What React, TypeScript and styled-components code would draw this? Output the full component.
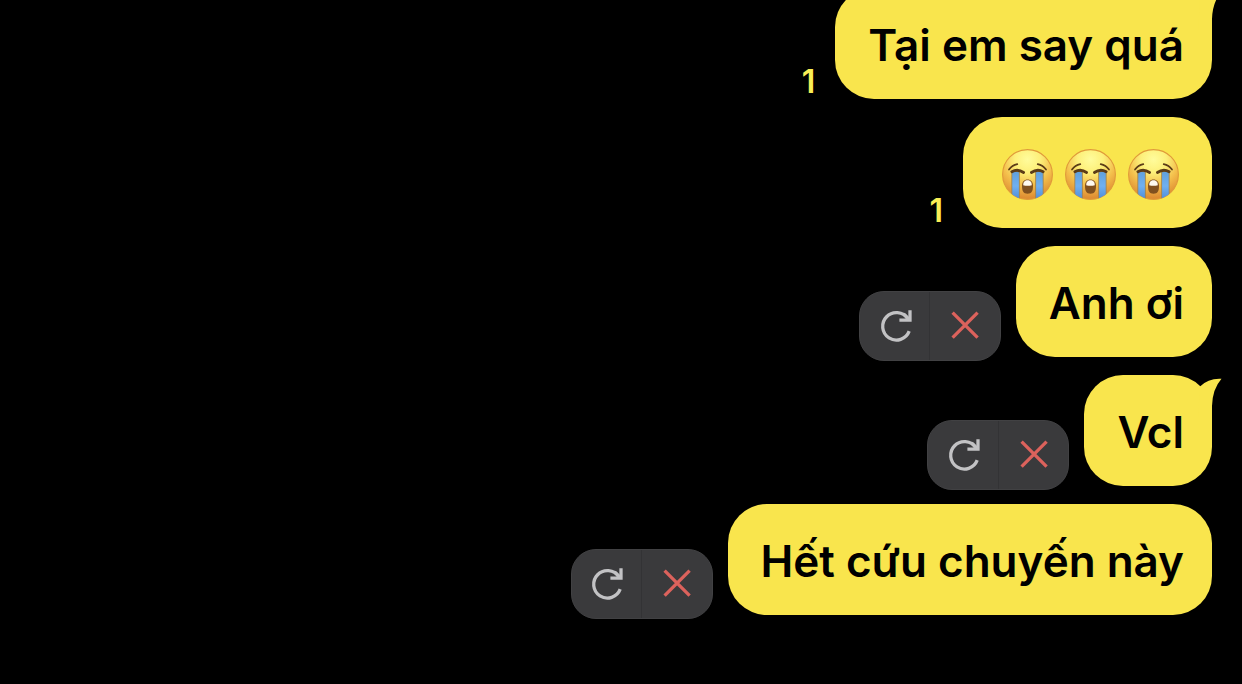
import React from "react";
import styled, { createGlobalStyle } from "styled-components";

const GlobalStyle = createGlobalStyle`
  * { box-sizing: border-box; }
  body {
    margin: 0;
    background: #000;
    font-family: Inter, "Noto Sans", sans-serif;
  }
`;

const Chat = styled.main`
  display: flex;
  flex-direction: column;
  justify-content: flex-end;
  align-items: flex-end;
  gap: 18px;
  height: 100vh;
  padding: 0 30px 69px;
  overflow: hidden;
  background: #000;
`;

const MessageRow = styled.div`
  display: flex;
  flex: none;
  align-items: flex-end;
`;

const Bubble = styled.div<{ $emoji?: boolean }>`
  position: relative;
  display: flex;
  align-items: center;
  gap: 12px;
  height: 111px;
  padding: ${(p) => (p.$emoji ? "3px 33px 0 39px" : "2px 28px 0 33px")};
  border-radius: 39px;
  background: #f9e54d;
  color: #000;
`;

const MessageText = styled.p`
  margin: 0;
  font-size: 44px;
  font-weight: 600;
  line-height: 56px;
  white-space: nowrap;
`;

const Tail = styled.svg`
  position: absolute;
  top: 0;
  right: -10px;
  width: 40px;
  height: 42px;
`;

const Unread = styled.span`
  margin-right: 20px;
  color: #f9ee55;
  font-size: 32px;
  font-weight: 600;
  line-height: 34px;
`;

const Actions = styled.div`
  display: flex;
  width: 142px;
  height: 70px;
  margin: 0 15px -4px 0;
  overflow: hidden;
  border: 1px solid #414143;
  border-radius: 25px;
  background: #3a3a3c;
`;

const ActionButton = styled.button`
  display: flex;
  flex: 1;
  align-items: center;
  justify-content: center;
  padding: 0;
  border: 0;
  background: transparent;

  & + & {
    border-left: 1px solid #333335;
  }
`;

const Icon = styled.svg`
  width: 36px;
  height: 36px;
  fill: none;
  stroke-width: 3.3;
`;

const EmojiImage = styled.svg`
  width: 51px;
  height: 51px;
`;

function CryingFace({ id }: { id: string }) {
  return (
    <EmojiImage viewBox="0 0 51 51" role="img" aria-label="😭">
      <defs>
        <radialGradient id={`${id}-face`} cx="50%" cy="20%" r="80%">
          <stop offset="0" stopColor="#fffc9c" />
          <stop offset="0.32" stopColor="#fdf07a" />
          <stop offset="0.65" stopColor="#f3bd4a" />
          <stop offset="1" stopColor="#dc8730" />
        </radialGradient>
        <linearGradient id={`${id}-tear`} x1="0" y1="0" x2="0" y2="1">
          <stop offset="0" stopColor="#5f9fdc" />
          <stop offset="0.5" stopColor="#70b0f0" />
          <stop offset="1" stopColor="#4a88d6" />
        </linearGradient>
        <clipPath id={`${id}-clip`}>
          <circle cx="25.5" cy="25.5" r="25.2" />
        </clipPath>
      </defs>
      <circle cx="25.5" cy="25.5" r="24.9" fill={`url(#${id}-face)`} stroke="#e09a3a" strokeWidth="1.1" />
      <g clipPath={`url(#${id}-clip)`} fill={`url(#${id}-tear)`} stroke="#a8803f" strokeWidth="0.8">
        <path d="M9.8 22.5Q13 21.5 17.4 23V52H9.8Z" />
        <path d="M33.6 23Q38 21.5 41.2 22.5V52H33.6Z" />
      </g>
      <g fill="none" stroke="#5c3c17" strokeLinecap="round">
        <path d="M7 20.6Q10 16.3 15.3 15.2M35.7 15.2Q41 16.3 44 20.6" strokeWidth="1.7" />
        <path d="M9.8 22.7Q15.8 19.4 21.6 23.5M29.4 23.5Q35.2 19.4 41.2 22.7" strokeWidth="2.8" />
      </g>
      <path d="M20 37C20 32.6 22.2 30.4 25.5 30.4S31 32.6 31 37C31 42.3 29.5 44.7 25.5 44.7S20 42.3 20 37Z" fill="#80501f" />
      <path d="M21.2 36.2C21.2 32.6 23 31.2 25.5 31.2S29.8 32.6 29.8 36.2Q25.5 37.4 21.2 36.2Z" fill="#fffaf0" />
    </EmojiImage>
  );
}

function FailedActions() {
  return (
    <Actions>
      <ActionButton type="button" aria-label="Gửi lại">
        <Icon viewBox="0 0 36 36" stroke="#c2c2c4">
          <path d="M32.2 23.2A13.7 13.7 0 1 1 30.8 10.8" />
          <path d="M22.4 12.1H33V2.2" />
          <path d="M32.2 11.4L26.6 5.8" />
        </Icon>
      </ActionButton>
      <ActionButton type="button" aria-label="Xóa">
        <Icon viewBox="0 0 36 36" stroke="#dc625c">
          <path d="M5.6 4.7L30.6 29.7M30.6 4.7L5.6 29.7" />
        </Icon>
      </ActionButton>
    </Actions>
  );
}

interface Message {
  text: string;
  status: "unread" | "failed";
  tail?: boolean;
  emoji?: boolean;
}

const messages: Message[] = [
  { text: "Tại em say quá", status: "unread", tail: true },
  { text: "😭😭😭", status: "unread", emoji: true },
  { text: "Anh ơi", status: "failed" },
  { text: "Vcl", status: "failed", tail: true },
  { text: "Hết cứu chuyến này", status: "failed" },
];

export default function App() {
  return (
    <>
      <GlobalStyle />
      <Chat>
        {messages.map((m) => (
          <MessageRow key={m.text}>
            {m.status === "unread" ? <Unread>1</Unread> : <FailedActions />}
            <Bubble $emoji={m.emoji}>
              {m.tail && (
                <Tail viewBox="0 0 40 42" aria-hidden="true">
                  <path d="M18 11.5Q26.5 3 39.5 3.8Q30.5 14 30 31V42H16Z" fill="#f9e54d" />
                </Tail>
              )}
              {m.emoji ? (
                Array.from(m.text).map((_, i) => <CryingFace key={i} id={`cry-${i}`} />)
              ) : (
                <MessageText>{m.text}</MessageText>
              )}
            </Bubble>
          </MessageRow>
        ))}
      </Chat>
    </>
  );
}
